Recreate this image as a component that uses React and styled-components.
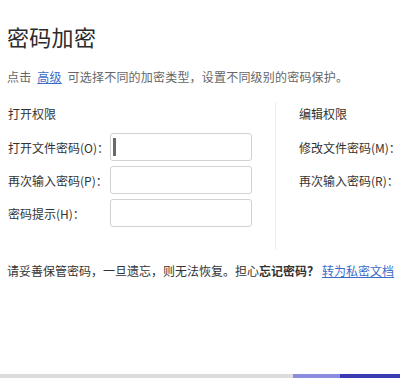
import React from 'react';
import styled, { createGlobalStyle } from 'styled-components';

const GlobalStyle = createGlobalStyle`
  html, body {
    margin: 0;
    padding: 0;
    background: #ffffff;
  }
  body {
    font-family: "Noto Sans CJK SC", "Noto Sans", "Liberation Sans", sans-serif;
  }
`;

const leftRows = [
  { label: '打开文件密码(O)：', focused: true },
  { label: '再次输入密码(P)：' },
  { label: '密码提示(H)：' },
];

const rightRows = [
  { label: '修改文件密码(M)：' },
  { label: '再次输入密码(R)：' },
];

const App = () => {
  return (
    <Page>
      <GlobalStyle />
      <Content>
        <Title>密码加密</Title>
        <Desc>
          点击 <Link>高级</Link> 可选择不同的加密类型，设置不同级别的密码保护。
        </Desc>

        <Columns>
          <Column>
            <SectionHead>打开权限</SectionHead>
            <Rows>
              {leftRows.map((row) => (
                <Row key={row.label}>
                  <Label>{row.label}</Label>
                  <Field>{row.focused && <Caret />}</Field>
                </Row>
              ))}
            </Rows>
          </Column>

          <Divider />

          <Column $right>
            <SectionHead>编辑权限</SectionHead>
            <Rows>
              {rightRows.map((row) => (
                <Row key={row.label}>
                  <Label>{row.label}</Label>
                  <Field />
                </Row>
              ))}
            </Rows>
          </Column>
        </Columns>

        <Note>
          请妥善保管密码，一旦遗忘，则无法恢复。担心<Strong>忘记密码？</Strong>
          <Link>转为私密文档</Link>
        </Note>
      </Content>

      <BottomBar>
        <BarPart $w="293px" $color="#dcdcdc" />
        <BarPart $w="47px" $color="#8d8de0" />
        <BarPart $w="60px" $color="#3a3ab4" />
      </BottomBar>
    </Page>
  );
};

export default App;

const Page = styled.div`
  width: 400px;
  height: 378px;
  overflow: hidden;
  display: flex;
  flex-direction: column;
`;

const Content = styled.div`
  flex: 1;
  padding: 0 0 0 7px;
  display: flex;
  flex-direction: column;
`;

const Title = styled.h1`
  margin: 24px 0 0;
  font-size: 22px;
  line-height: 24px;
  font-weight: normal;
  color: #2b2b2b;
  letter-spacing: 0.3px;
`;

const Desc = styled.p`
  margin: 22px 0 0;
  font-size: 12px;
  line-height: 14px;
  color: #666;
  white-space: nowrap;
  word-spacing: 3px;
  letter-spacing: 0.2px;
`;

const Link = styled.a`
  color: #3b6cc9;
  text-decoration: underline;
  cursor: pointer;
`;

const Columns = styled.div`
  display: flex;
  margin-top: 18px;
  height: 148px;
`;

const Column = styled.div`
  width: ${(p) => (p.$right ? 'auto' : '268px')};
  flex-shrink: 0;
  padding: 5px 0 0 ${(p) => (p.$right ? '23px' : '1px')};
  box-sizing: border-box;
`;

const Divider = styled.div`
  width: 1px;
  flex-shrink: 0;
  background: #ececec;
`;

const SectionHead = styled.div`
  font-size: 12px;
  line-height: 14px;
  color: #333;
  white-space: nowrap;
`;

const Rows = styled.div`
  display: flex;
  flex-direction: column;
  gap: 5px;
  margin-top: 12px;
`;

const Row = styled.div`
  display: flex;
  align-items: center;
  height: 28px;
`;

const Label = styled.span`
  width: 102px;
  flex-shrink: 0;
  font-size: 12px;
  color: #333;
  white-space: nowrap;
`;

const Field = styled.div`
  width: 142px;
  height: 28px;
  flex-shrink: 0;
  box-sizing: border-box;
  border: 1px solid #d2d2d2;
  border-radius: 3px;
  background: #fff;
  display: flex;
  align-items: center;
  padding-left: 2px;
`;

const Caret = styled.span`
  width: 3px;
  height: 18px;
  background: #6a6a6a;
`;

const Note = styled.p`
  margin: 14px 0 0;
  font-size: 12px;
  line-height: 14px;
  color: #333;
  white-space: nowrap;
`;

const Strong = styled.b`
  font-weight: bold;
  margin-right: 3px;
`;

const BottomBar = styled.div`
  display: flex;
  height: 4px;
  flex-shrink: 0;
`;

const BarPart = styled.div`
  width: ${(p) => p.$w};
  background: ${(p) => p.$color};
`;
